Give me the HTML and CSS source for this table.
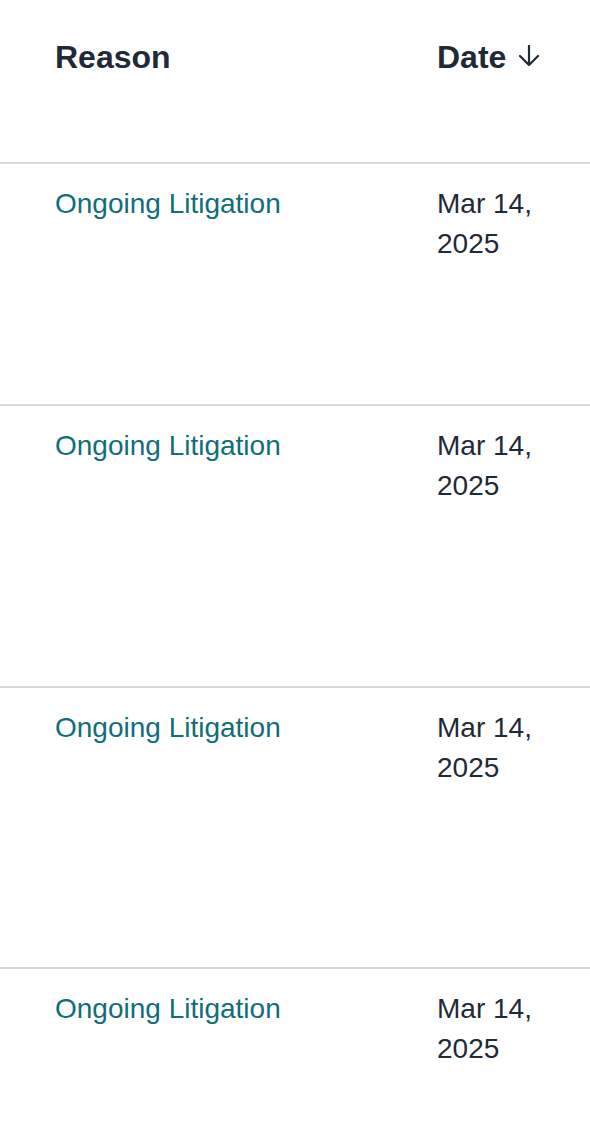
FILE: index.html
```html
<!DOCTYPE html>
<html lang="en">
<head>
<meta charset="utf-8">
<title>Holds</title>
<link rel="stylesheet" href="styles.css">
</head>
<body>
<div class="table">
  <div class="row head">
    <div class="cell reason">Reason</div>
    <div class="cell date">Date
      <svg class="sort" width="22" height="22" viewBox="0 0 22 22" aria-hidden="true">
        <path d="M11 1 V20 M2 11 L11 20 L20 11" fill="none" stroke="#1f2a37" stroke-width="2.2" stroke-linecap="round" stroke-linejoin="round"/>
      </svg>
    </div>
  </div>
  <div class="row body r1">
    <div class="cell reason"><a class="link" href="#">Ongoing Litigation</a></div>
    <div class="cell date">Mar 14, 2025</div>
  </div>
  <div class="row body r2">
    <div class="cell reason"><a class="link" href="#">Ongoing Litigation</a></div>
    <div class="cell date">Mar 14, 2025</div>
  </div>
  <div class="row body r3">
    <div class="cell reason"><a class="link" href="#">Ongoing Litigation</a></div>
    <div class="cell date">Mar 14, 2025</div>
  </div>
  <div class="row body r4">
    <div class="cell reason"><a class="link" href="#">Ongoing Litigation</a></div>
    <div class="cell date">Mar 14, 2025</div>
  </div>
</div>
</body>
</html>
```

FILE: styles.css
```css
html, body {
  margin: 0;
  padding: 0;
  background: #ffffff;
}
body {
  font-family: "Liberation Sans", Arial, sans-serif;
  color: #1f2a37;
  width: 590px;
  height: 1146px;
  overflow: hidden;
}
.table {
  display: flex;
  flex-direction: column;
}
.row {
  display: grid;
  grid-template-columns: 382px 130px;
  align-content: start;
  align-items: start;
  padding-left: 55px;
  box-sizing: border-box;
}
.head {
  height: 162px;
  padding-top: 33px;
  font-size: 32px;
  font-weight: 700;
  line-height: 48px;
}
.head .date {
  display: flex;
  align-items: center;
  gap: 12px;
}
.sort {
  display: block;
  margin-top: -2px;
}
.body {
  border-top: 2px solid #d9d9d9;
  padding-top: 20px;
  font-size: 28px;
  line-height: 40px;
}
.r1 { height: 242px; }
.r2 { height: 282px; }
.r3 { height: 281px; }
.r4 { height: 179px; }
.date {
  width: 110px;
  white-space: normal;
}
.head .date { width: auto; white-space: nowrap; }
.link {
  color: #0f6e7a;
  text-decoration: none;
}
```
